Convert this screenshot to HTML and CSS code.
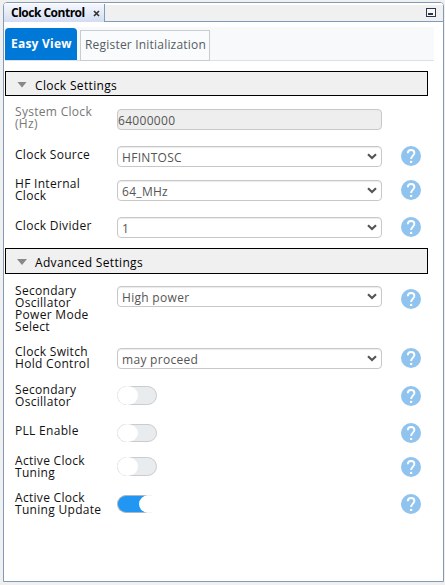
FILE: index.html
```html
<!DOCTYPE html>
<html lang="en">
<head>
<meta charset="utf-8">
<title>Clock Control</title>
<link rel="stylesheet" href="styles.css">
</head>
<body>
<svg width="0" height="0" class="defs" aria-hidden="true">
  <symbol id="help" viewBox="0 0 20 20"><circle cx="10" cy="10" r="10" fill="#90c4ef"/><path d="M6.8 7.3C6.8 5.1 8 4 10.1 4s3.3 1.1 3.3 3c0 2.5-3.3 2.8-3.3 6.1" fill="none" stroke="#fff" stroke-width="1.9"/><rect x="9" y="14.9" width="2.2" height="2.1" fill="#fff"/></symbol>
  <symbol id="chevron" viewBox="0 0 10 7"><path d="M1 1.2 5 5l4-3.8" fill="none" stroke="#555" stroke-width="2.2"/></symbol>
</svg>
<main class="window">
  <header class="titlebar">
    <div class="view-tab"><span class="view-name">Clock Control</span><svg class="close" viewBox="0 0 7 7"><path d="M1 1l5 5M6 1 1 6" stroke="#333" stroke-width="1.7"/></svg></div>
    <svg class="minimize" viewBox="0 0 10 9"><rect x=".5" y=".5" width="9" height="8" fill="#f7f7f7" stroke="#303645"/><path d="M2 5h5v2H2z" fill="#303645"/></svg>
  </header>
  <nav class="tabs"><a class="tab active"><span>Easy View</span></a><a class="tab"><span>Register Initialization</span></a></nav>
  <h2 class="section clock"><i></i><span>Clock Settings</span></h2>
  <section class="settings">
    <div class="row r1"><label class="muted">System Clock<br>(Hz)</label><div class="field disabled"><span>64000000</span></div></div>
    <div class="row r2"><label>Clock Source</label><div class="field select"><span>HFINTOSC</span><svg><use href="#chevron"/></svg></div><svg class="help"><use href="#help"/></svg></div>
    <div class="row r3"><label>HF Internal<br>Clock</label><div class="field select"><span>64_MHz</span><svg><use href="#chevron"/></svg></div><svg class="help"><use href="#help"/></svg></div>
    <div class="row r4"><label>Clock Divider</label><div class="field select"><span>1</span><svg><use href="#chevron"/></svg></div><svg class="help"><use href="#help"/></svg></div>
  </section>
  <h2 class="section advanced"><i></i><span>Advanced Settings</span></h2>
  <section class="settings advanced-settings">
    <div class="row r5"><label>Secondary<br>Oscillator<br>Power Mode<br>Select</label><div class="field select"><span>High power</span><svg><use href="#chevron"/></svg></div><svg class="help"><use href="#help"/></svg></div>
    <div class="row r6"><label>Clock Switch<br>Hold Control</label><div class="field select"><span>may proceed</span><svg><use href="#chevron"/></svg></div><svg class="help"><use href="#help"/></svg></div>
    <div class="row r7"><label>Secondary<br>Oscillator</label><div class="toggle"></div><svg class="help"><use href="#help"/></svg></div>
    <div class="row r8"><label>PLL Enable</label><div class="toggle short"></div><svg class="help"><use href="#help"/></svg></div>
    <div class="row r9"><label>Active Clock<br>Tuning</label><div class="toggle"></div><svg class="help"><use href="#help"/></svg></div>
    <div class="row r10"><label>Active Clock<br>Tuning Update</label><div class="toggle short on"></div><svg class="help"><use href="#help"/></svg></div>
  </section>
</main>
</body>
</html>
```
FILE: styles.css
```css
* { box-sizing: border-box; }
body { margin: 0; padding: 2px 1px 3px 3px; height: 585px; overflow: hidden; background: #f0f0f0; font-family: "Open Sans", "Noto Sans", sans-serif; font-size: 12px; color: #111; }
.defs { position: absolute; }
.window { height: 580px; border: 1px solid #829bb5; border-radius: 4px 4px 0 0; background: #fff; overflow: hidden; }
.titlebar { height: 19px; display: flex; justify-content: space-between; align-items: flex-start; border-bottom: 1px solid #7f9db9; border-top: 2px solid #fff; background: #f0f0f0; }
.view-tab { width: 101px; height: 18px; margin-top: -1px; padding-left: 7px; display: flex; align-items: center; border-right: 1px solid #829bb5; background: linear-gradient(#f5f7fd, #d3dcf2); color: #000; font-weight: 700; font-size: 12px; white-space: nowrap; }
.view-name { width: 82px; letter-spacing: -.5px; margin-top: -2px; }
.close { width: 7px; height: 7px; flex: none; margin-top: 1px; }
.minimize { width: 10px; height: 9px; margin: 3px 7px 0 0; }
.tabs { display: flex; align-items: flex-end; height: 34px; width: 429px; margin: 5px 0 0 1px; background: #f8f9fb; border-bottom: 1px solid #dce1e6; }
.tab { width: 130px; height: 31px; margin: 0 0 -1px 3px; padding: 0 0 2px 4px; display: flex; align-items: center; border: 1px solid #c9cdd1; color: #545b62; white-space: nowrap; background: #fafbfc; letter-spacing: .2px; }
.tab.active { width: 72px; height: 32px; margin: 0; padding: 0 0 1px 6px; border: 0; border-radius: 4px 4px 0 0; background: #0078d7; color: #fff; font-weight: 700; letter-spacing: .23px; }
.section { width: 423px; height: 25px; margin: 10px 0 0 1px; padding-left: 11px; display: flex; align-items: center; border: 1px solid #000; background: #f0f0f0; font-size: 12px; font-weight: 400; color: #000; letter-spacing: .33px; }
.section i { width: 10px; height: 6px; margin: 2px 8px 0 0; background: #888; clip-path: polygon(0 0, 100% 0, 50% 100%); }
.section span { padding-top: 3px; }
.advanced { height: 26px; margin-top: 0; }
.settings { padding: 9px 0 0 11px; }
.advanced-settings { padding-top: 6px; }
.row { display: grid; grid-template-columns: 102px 284px 20px; align-items: start; }
label { line-height: 12px; white-space: nowrap; letter-spacing: .3px; }
.muted { color: #777; }
.field { width: 265px; height: 21px; display: flex; align-items: center; justify-content: space-between; padding: 0 4px; border: 1px solid #c8c8c8; border-radius: 4px; box-shadow: inset 0 1px 1px #ececec; color: #555; line-height: 18px; letter-spacing: .3px; }
.disabled { background: #eee; padding-left: 0; }
.field svg { width: 10px; height: 7px; margin-bottom: 1px; }
.field span { padding-top: 2px; }
.help { width: 20px; height: 20px; }
.toggle { width: 40px; height: 19px; border: 1px solid #ccc; border-radius: 10px; background: #e9ecef; }
.toggle::before { content: ""; display: block; width: 20px; height: 19px; margin: -1px 0 0 -1px; border-radius: 50%; background: #fff; border-left: 1px solid #eee; }
.toggle.short { height: 18px; }
.toggle.short::before { height: 18px; }
.toggle.on { background: #2196f3; border-color: #aab8c2 #fff #aab8c2 #aab8c2; }
.toggle.on::before { width: 19px; margin-left: 21px; border: 0; }
.r1 { height: 35px; } .r1 label { margin-top: 1px; } .r1 .field { margin-top: 4px; }
.r2 { height: 35px; } .r2 label { margin-top: 9px; } .r2 .field, .r2 .help { margin-top: 6px; }
.r3 { height: 37px; } .r3 label { margin-top: 3px; } .r3 .field, .r3 .help { margin-top: 5px; }
.r4 { height: 36px; } .r4 label { margin-top: 8px; } .r4 .field, .r4 .help { margin-top: 5px; }
.r5 { height: 62px; } .r5 label { margin-top: 5px; } .r5 .field { margin-top: 6px; } .r5 .help { margin-top: 9px; }
.r6 { height: 39px; } .r6 label { margin-top: 4px; } .r6 .field, .r6 .help { margin-top: 6px; }
.r7 { height: 38px; } .r7 label { margin-top: 3px; } .r7 .toggle, .r7 .help { margin-top: 5px; }
.r8 { height: 33px; } .r8 label { margin-top: 6px; } .r8 .toggle { margin-top: 5px; } .r8 .help { margin-top: 4px; }
.r9 { height: 37px; } .r9 label { margin-top: 3px; } .r9 .toggle, .r9 .help { margin-top: 5px; }
.r10 { height: 37px; } .r10 label { margin-top: 3px; } .r10 .toggle { margin-top: 6px; } .r10 .help { margin-top: 5px; }
```
